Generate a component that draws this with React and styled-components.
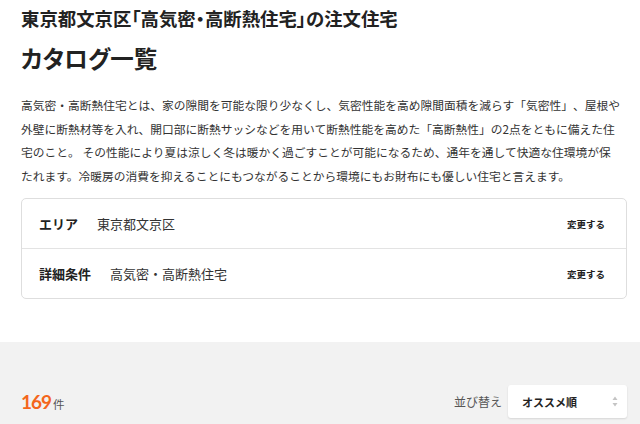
import React from "react";
import styled, { createGlobalStyle } from "styled-components";

const Global = createGlobalStyle`
  html, body { margin: 0; padding: 0; background: #fff; }
  body {
    font-family: "Noto Sans CJK JP", "Noto Sans", sans-serif;
    color: #333;
    -webkit-font-smoothing: antialiased;
    text-spacing-trim: space-all;
  }
  * { box-sizing: border-box; }
`;

const Page = styled.div`
  width: 640px;
  height: 424px;
  overflow: hidden;
  display: flex;
  flex-direction: column;
`;

const Intro = styled.section`
  padding: 5px 13px 43px 21px;
  display: flex;
  flex-direction: column;
`;

const AreaTitle = styled.h1`
  margin: 0;
  font-size: 18.4px;
  line-height: 26px;
  font-weight: 700;
  color: #222;
  font-feature-settings: "palt";
`;

const PageTitle = styled.h2`
  margin: 10px 0 0;
  font-size: 23.5px;
  line-height: 34px;
  font-weight: 700;
  color: #222;
  font-feature-settings: "palt";
`;

const Lead = styled.p`
  margin: 18px 0 0;
  max-width: 601px;
  font-size: 11.75px;
  line-height: 23.5px;
  color: #333;
  text-spacing-trim: space-all;
`;

const ConditionCard = styled.div`
  margin-top: 11px;
  border: 1px solid #dedede;
  border-radius: 5px;
  display: flex;
  flex-direction: column;
`;

const ConditionRow = styled.div`
  height: 49px;
  display: flex;
  align-items: center;
  padding: 0 21px 0 17px;
  & + & { border-top: 1px solid #e3e3e3; height: 50px; }
`;

const CondLabel = styled.span`
  font-size: 13px;
  font-weight: 700;
  color: #222;
  margin-right: ${(p) => p.$gap}px;
`;

const CondValue = styled.span`
  font-size: 13px;
  color: #333;
  flex: 1;
`;

const ChangeLink = styled.a`
  font-size: 9.5px;
  font-weight: 700;
  color: #222;
  text-decoration: none;
`;

const ResultBar = styled.section`
  flex: 1;
  background: #f2f2f2;
  padding: 43px 13px 0 21px;
`;

const ResultRow = styled.div`
  display: flex;
  align-items: center;
  justify-content: space-between;
`;

const Count = styled.div`
  display: flex;
  align-items: baseline;
`;

const CountNum = styled.span`
  font-family: "Lato", "Noto Sans", sans-serif;
  font-weight: 700;
  font-size: 19px;
  color: #f4661b;
  letter-spacing: -1px;
`;

const CountUnit = styled.span`
  font-size: 11.5px;
  color: #555;
  margin-left: 2px;
`;

const Sort = styled.div`
  display: flex;
  align-items: center;
  gap: 6px;
`;

const SortLabel = styled.span`
  font-size: 12px;
  color: #555;
`;

const SelectBox = styled.div`
  width: 119px;
  height: 33px;
  background: #fff;
  border-radius: 3px;
  box-shadow: 0 1px 2px rgba(0, 0, 0, 0.12);
  display: flex;
  align-items: center;
  justify-content: space-between;
  padding: 0 9px 0 14px;
  font-size: 11px;
  font-weight: 700;
  color: #222;
`;

const Arrows = () => (
  <svg width="6" height="11" viewBox="0 0 6 11">
    <path d="M3 0.5 L5.5 4 H0.5 Z" fill="#c4c4c4" />
    <path d="M3 10.5 L5.5 7 H0.5 Z" fill="#c4c4c4" />
  </svg>
);

export default function App() {
  return (
    <>
      <Global />
      <Page>
        <Intro>
          <AreaTitle>東京都文京区「高気密・高断熱住宅」の注文住宅</AreaTitle>
          <PageTitle>カタログ一覧</PageTitle>
          <Lead>
            高気密・高断熱住宅とは、家の隙間を可能な限り少なくし、気密性能を高め隙間面積を減らす「気密性」、屋根や外壁に断熱材等を入れ、開口部に断熱サッシなどを用いて断熱性能を高めた「高断熱性」の2点をともに備えた住宅のこと。 その性能により夏は涼しく冬は暖かく過ごすことが可能になるため、通年を通して快適な住環境が保たれます。冷暖房の消費を抑えることにもつながることから環境にもお財布にも優しい住宅と言えます。
          </Lead>
          <ConditionCard>
            <ConditionRow>
              <CondLabel $gap={19}>エリア</CondLabel>
              <CondValue>東京都文京区</CondValue>
              <ChangeLink href="#">変更する</ChangeLink>
            </ConditionRow>
            <ConditionRow>
              <CondLabel $gap={19}>詳細条件</CondLabel>
              <CondValue>高気密・高断熱住宅</CondValue>
              <ChangeLink href="#">変更する</ChangeLink>
            </ConditionRow>
          </ConditionCard>
        </Intro>
        <ResultBar>
          <ResultRow>
            <Count>
              <CountNum>169</CountNum>
              <CountUnit>件</CountUnit>
            </Count>
            <Sort>
              <SortLabel>並び替え</SortLabel>
              <SelectBox>
                <span>オススメ順</span>
                <Arrows />
              </SelectBox>
            </Sort>
          </ResultRow>
        </ResultBar>
      </Page>
    </>
  );
}
